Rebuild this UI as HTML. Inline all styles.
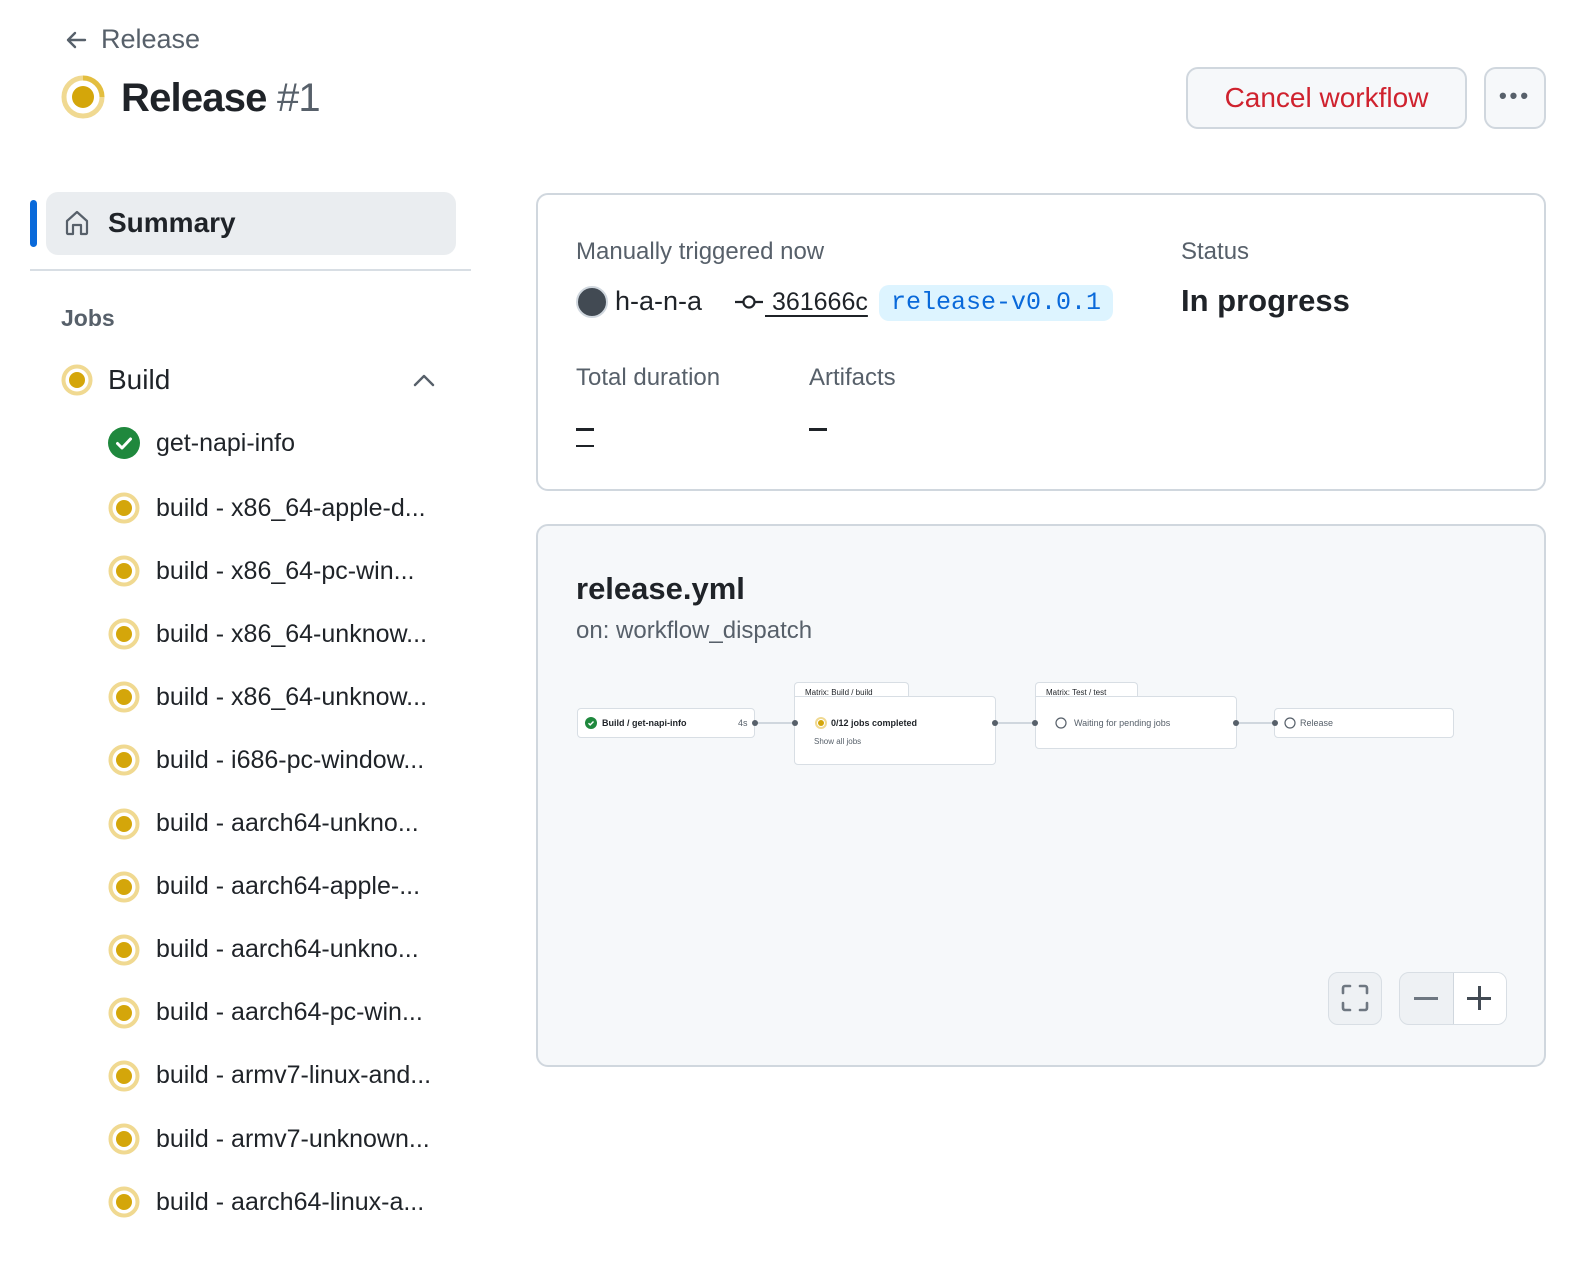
<!DOCTYPE html>
<html><head><meta charset="utf-8"><style>
*{box-sizing:border-box;margin:0;padding:0}
body{width:1590px;height:1266px;background:#fff;font-family:"Liberation Sans",sans-serif;color:#1f2328;position:relative;overflow:hidden}
.a{position:absolute;white-space:nowrap}
.job{position:absolute;left:108px;font-size:25px;color:#1f2328;display:flex;align-items:center;height:34px}
.job svg{margin-right:16px}
.node{position:absolute;background:#fff;border:1px solid #d8dee4;border-radius:4px;font-size:9px;color:#1f2328}
.dot{position:absolute;width:6px;height:6px;border-radius:3px;background:#57606a}
.ln{position:absolute;height:2px;background:#d0d7de}
</style></head><body>
<svg class="a" style="left:64px;top:28px" width="24" height="24" viewBox="0 0 24 24"><path d="M21 12H4M11 5l-7 7 7 7" fill="none" stroke="#57606a" stroke-width="2.4" stroke-linecap="round" stroke-linejoin="round"/></svg>
<div class="a" style="left:101px;top:24px;font-size:27px;color:#57606a">Release</div>
<svg class="a" style="left:61px;top:75px" width="44" height="44" viewBox="0 0 44 44"><circle cx="22" cy="22" r="19" fill="none" stroke="#f0d991" stroke-width="5"/><path d="M22 3a19 19 0 0 1 19 19" fill="none" stroke="#dbab09" stroke-width="5" opacity=".6"/><circle cx="22" cy="22" r="11" fill="#d4a60a"/></svg>
<div class="a" style="left:121px;top:76px;font-size:40px;font-weight:bold;letter-spacing:-0.8px">Release <span style="color:#57606a;font-weight:normal">#1</span></div>

<div class="a" style="left:1186px;top:67px;width:281px;height:62px;border:2px solid #d0d7de;border-radius:12px;background:#f6f8fa;color:#cf222e;font-size:28px;text-align:center;line-height:58px">Cancel workflow</div>
<div class="a" style="left:1484px;top:67px;width:62px;height:62px;border:2px solid #d0d7de;border-radius:12px;background:#f6f8fa;text-align:center;line-height:54px;font-size:22px;color:#57606a;letter-spacing:3px;font-weight:bold">•••</div>

<div class="a" style="left:30px;top:200px;width:7px;height:47px;border-radius:4px;background:#0969da"></div>
<div class="a" style="left:46px;top:192px;width:410px;height:63px;border-radius:12px;background:#eaedf0"></div>
<svg class="a" style="left:62px;top:208px" width="30" height="30" viewBox="0 0 30 30"><path d="M5 13L15 4l10 9v12a1 1 0 0 1-1 1h-5V17h-8v9H6a1 1 0 0 1-1-1z" fill="none" stroke="#57606a" stroke-width="2.2" stroke-linejoin="round"/></svg>
<div class="a" style="left:108px;top:207px;font-size:28px;font-weight:bold">Summary</div>
<div class="a" style="left:30px;top:269px;width:441px;height:2px;background:#d8dee4"></div>
<div class="a" style="left:61px;top:305px;font-size:23px;color:#57606a;font-weight:bold">Jobs</div>

<svg class="a" style="left:61px;top:364px" width="32" height="32" viewBox="0 0 32 32"><circle cx="16" cy="16" r="13.5" fill="none" stroke="#f0d991" stroke-width="4"/><circle cx="16" cy="16" r="8" fill="#d4a60a"/></svg>
<div class="a" style="left:108px;top:364px;font-size:28px">Build</div>
<svg class="a" style="left:412px;top:370px" width="24" height="20" viewBox="0 0 24 20"><path d="M3 15l9-9 9 9" fill="none" stroke="#57606a" stroke-width="2.4" stroke-linecap="round" stroke-linejoin="round"/></svg>

<div class="job" style="top:426px"><svg width="32" height="32" viewBox="0 0 32 32"><circle cx="16" cy="16" r="16" fill="#1f883d"/><path d="M9.5 16.5l4.5 4.5 8.5-9" fill="none" stroke="#fff" stroke-width="3" stroke-linecap="round" stroke-linejoin="round"/></svg>get-napi-info</div>
<div id="jobs"></div>

<div class="a" style="left:536px;top:193px;width:1010px;height:298px;border:2px solid #d0d7de;border-radius:12px"></div>
<div class="a" style="left:576px;top:238px;font-size:24px;color:#57606a">Manually triggered now</div>
<div class="a" style="left:576px;top:286px;width:32px;height:32px;border-radius:16px;background:#424a53;border:2px solid #d0d7de"></div>
<div class="a" style="left:615px;top:286px;font-size:27px">h-a-n-a</div>
<svg class="a" style="left:734px;top:292px" width="30" height="20" viewBox="0 0 30 20"><path d="M1 10h8M21 10h8" stroke="#1f2328" stroke-width="2.2"/><circle cx="15" cy="10" r="5.5" fill="none" stroke="#1f2328" stroke-width="2.2"/></svg>
<div class="a" style="left:765px;top:288px;font-size:25px;text-decoration:underline;text-underline-offset:5px">&nbsp;361666c</div>
<div class="a" style="left:879px;top:285px;height:36px;padding:0 12px;border-radius:10px;background:#ddf4ff;color:#0969da;font-family:'Liberation Mono',monospace;font-size:25px;line-height:36px">release-v0.0.1</div>
<div class="a" style="left:1181px;top:238px;font-size:24px;color:#57606a">Status</div>
<div class="a" style="left:1181px;top:283px;font-size:31px;font-weight:bold">In progress</div>
<div class="a" style="left:576px;top:364px;font-size:24px;color:#57606a">Total duration</div>
<div class="a" style="left:809px;top:364px;font-size:24px;color:#57606a">Artifacts</div>
<div class="a" style="left:576px;top:428px;width:18px;height:3px;background:#1f2328"></div>
<div class="a" style="left:576px;top:445px;width:18px;height:2px;background:#1f2328"></div>
<div class="a" style="left:809px;top:428px;width:18px;height:3px;background:#1f2328"></div>

<div class="a" style="left:536px;top:524px;width:1010px;height:543px;border:2px solid #d0d7de;border-radius:12px;background:#f6f8fa"></div>
<div class="a" style="left:576px;top:571px;font-size:31px;font-weight:bold">release.yml</div>
<div class="a" style="left:576px;top:617px;font-size:24px;color:#57606a">on: workflow_dispatch</div>

<div class="node" style="left:577px;top:708px;width:178px;height:30px"><svg class="a" style="left:7px;top:8px" width="12" height="12" viewBox="0 0 12 12"><circle cx="6" cy="6" r="6" fill="#1f883d"/><path d="M3.5 6.2l1.7 1.7 3.3-3.4" fill="none" stroke="#fff" stroke-width="1.4"/></svg><span class="a" style="left:24px;top:9px;font-weight:bold">Build / get-napi-info</span><span class="a" style="left:160px;top:9px;color:#57606a">4s</span></div>
<div class="node" style="left:794px;top:682px;width:115px;height:20px;border-bottom:none"><span class="a" style="left:10px;top:5px;font-size:8px">Matrix: Build / build</span></div>
<div class="node" style="left:794px;top:696px;width:202px;height:69px;border-top-left-radius:0"><svg class="a" style="left:20px;top:20px" width="12" height="12" viewBox="0 0 12 12"><circle cx="6" cy="6" r="5" fill="none" stroke="#f0d991" stroke-width="2"/><circle cx="6" cy="6" r="3" fill="#d4a60a"/></svg><span class="a" style="left:36px;top:21px;font-weight:bold">0/12 jobs completed</span><span class="a" style="left:19px;top:40px;font-size:8px;color:#57606a">Show all jobs</span></div>
<div class="node" style="left:1035px;top:682px;width:103px;height:20px;border-bottom:none"><span class="a" style="left:10px;top:5px;font-size:8px">Matrix: Test / test</span></div>
<div class="node" style="left:1035px;top:696px;width:202px;height:53px;border-top-left-radius:0"><svg class="a" style="left:19px;top:20px" width="12" height="12" viewBox="0 0 12 12"><circle cx="6" cy="6" r="5" fill="none" stroke="#57606a" stroke-width="1.2"/></svg><span class="a" style="left:38px;top:21px;color:#57606a">Waiting for pending jobs</span></div>
<div class="node" style="left:1274px;top:708px;width:180px;height:30px"><svg class="a" style="left:9px;top:8px" width="12" height="12" viewBox="0 0 12 12"><circle cx="6" cy="6" r="5" fill="none" stroke="#57606a" stroke-width="1.2"/></svg><span class="a" style="left:25px;top:9px;color:#57606a">Release</span></div>
<div class="ln" style="left:756px;top:722px;width:38px"></div>
<div class="ln" style="left:996px;top:722px;width:38px"></div>
<div class="ln" style="left:1237px;top:722px;width:38px"></div>
<div class="dot" style="left:752px;top:720px"></div><div class="dot" style="left:792px;top:720px"></div>
<div class="dot" style="left:992px;top:720px"></div><div class="dot" style="left:1032px;top:720px"></div>
<div class="dot" style="left:1233px;top:720px"></div><div class="dot" style="left:1272px;top:720px"></div>

<div class="a" style="left:1328px;top:972px;width:54px;height:53px;border:1px solid #d8dee4;border-radius:10px;background:#eef1f4"></div>
<svg class="a" style="left:1340px;top:983px" width="30" height="30" viewBox="0 0 30 30"><path d="M3 10V5a2 2 0 0 1 2-2h5M20 3h5a2 2 0 0 1 2 2v5M27 20v5a2 2 0 0 1-2 2h-5M10 27H5a2 2 0 0 1-2-2v-5" fill="none" stroke="#6e7781" stroke-width="2.6" stroke-linecap="round"/></svg>
<div class="a" style="left:1399px;top:972px;width:108px;height:53px;border:1px solid #d8dee4;border-radius:10px;background:#eef1f4;overflow:hidden"><div class="a" style="left:53px;top:0;width:55px;height:53px;background:#fff;border-left:1px solid #d0d7de"></div></div>
<div class="a" style="left:1414px;top:997px;width:24px;height:3px;background:#6e7781"></div>
<div class="a" style="left:1467px;top:997px;width:24px;height:3px;background:#424a53"></div>
<div class="a" style="left:1478px;top:986px;width:3px;height:24px;background:#424a53"></div>

<script>
var names=["build - x86_64-apple-d...","build - x86_64-pc-win...","build - x86_64-unknow...","build - x86_64-unknow...","build - i686-pc-window...","build - aarch64-unkno...","build - aarch64-apple-...","build - aarch64-unkno...","build - aarch64-pc-win...","build - armv7-linux-and...","build - armv7-unknown...","build - aarch64-linux-a..."];
var h="";for(var i=0;i<names.length;i++){var y=491+i*63.1;h+='<div class="job" style="top:'+y+'px"><svg width="32" height="32" viewBox="0 0 32 32"><circle cx="16" cy="16" r="13.5" fill="none" stroke="#f0d991" stroke-width="4"/><circle cx="16" cy="16" r="8" fill="#d4a60a"/></svg>'+names[i]+'</div>';}
document.getElementById("jobs").outerHTML=h;
</script>
</body></html>
